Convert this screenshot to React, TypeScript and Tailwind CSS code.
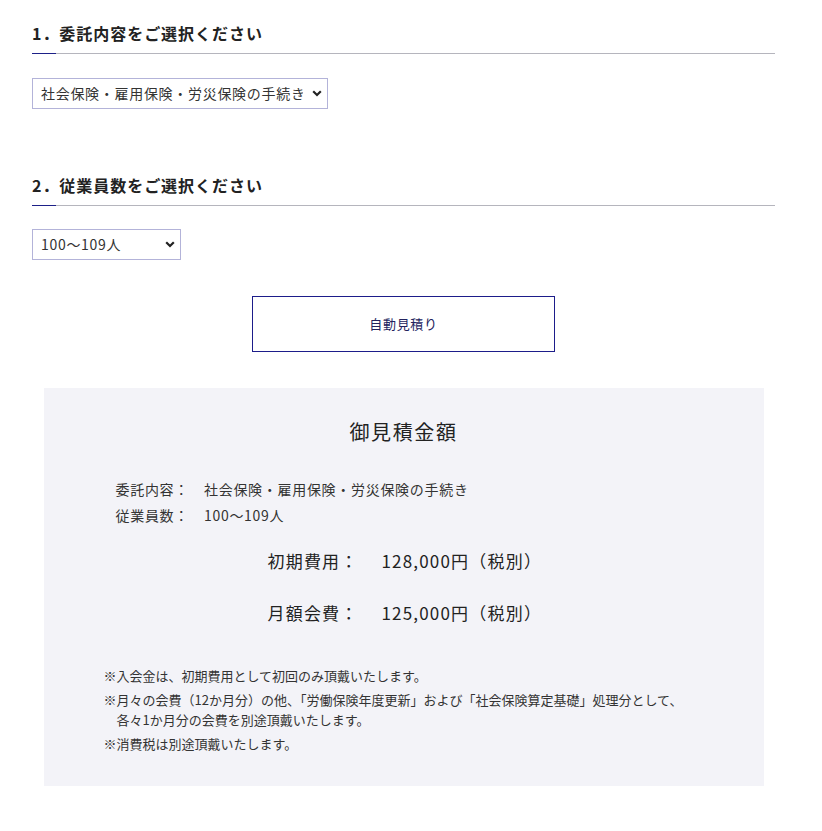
import { useState } from 'react';

const itakuOptions = [
  '社会保険・雇用保険・労災保険の手続き',
  '社会保険の手続き',
  '給与計算',
];

const ninzuOptions = ['1〜9人', '10〜19人', '50〜59人', '100〜109人'];

function SectionTitle({ text }: { text: string }) {
  return (
    <div className="relative border-b border-[#b5b5bd] pb-[8px]">
      <h2 className="text-[16px] leading-[24px] font-bold text-[#222] tracking-[0.06em]">{text}</h2>
      <span className="absolute left-0 bottom-[-1px] w-[24px] h-[1px] bg-[#1d2088]" />
    </div>
  );
}

function Select({ value, options, onChange, width }: { value: string; options: string[]; onChange: (v: string) => void; width: string }) {
  return (
    <div className={`relative ${width}`}>
      <select
        value={value}
        onChange={(e) => onChange(e.target.value)}
        className="appearance-none w-full h-[31px] border border-[#b3b3d9] bg-white pl-[8px] pr-[24px] text-[14px] tracking-[0.05em] text-[#333] outline-none"
      >
        {options.map((o) => (
          <option key={o} value={o}>{o}</option>
        ))}
      </select>
      <svg className="absolute right-[6px] top-[12px] pointer-events-none" width="10" height="7" viewBox="0 0 10 7">
        <path d="M1.2 1.2 L5 5 L8.8 1.2" fill="none" stroke="#222" strokeWidth="2.2" />
      </svg>
    </div>
  );
}

export default function App() {
  const [itaku, setItaku] = useState(itakuOptions[0]);
  const [ninzu, setNinzu] = useState('100〜109人');

  return (
    <div className="bg-white min-h-[831px] pl-[32px] pt-[21px] font-['Noto_Sans_CJK_JP','Noto_Sans',sans-serif] text-[#333]">
      <div className="w-[743px]">
        <SectionTitle text="1．委託内容をご選択ください" />
        <div className="mt-[24px]">
          <Select value={itaku} options={itakuOptions} onChange={setItaku} width="w-[296px]" />
        </div>

        <div className="mt-[64px]">
          <SectionTitle text="2．従業員数をご選択ください" />
        </div>
        <div className="mt-[23px]">
          <Select value={ninzu} options={ninzuOptions} onChange={setNinzu} width="w-[149px]" />
        </div>

        <button className="block mx-auto mt-[36px] w-[303px] h-[56px] border border-[#1d1d8a] bg-white text-[13px] tracking-[0.05em] text-[#23235e]">
          自動見積り
        </button>

        {/* 見積結果 */}
        <div className="mx-auto mt-[36px] w-[720px] bg-[#f3f3f8] pt-[29px] pb-[32px]">
          <h3 className="text-center text-[20px] leading-[30px] tracking-[0.08em] text-[#222]">御見積金額</h3>

          <div className="mt-[29px] pl-[72px] text-[14px] leading-[26px] tracking-[0.05em] text-[#333]">
            <div className="flex gap-[15px]">
              <span>委託内容：</span>
              <span>{itaku}</span>
            </div>
            <div className="flex gap-[15px]">
              <span>従業員数：</span>
              <span>{ninzu}</span>
            </div>
          </div>

          <div className="mt-[20px] pl-[224px] text-[17px] leading-[26px] tracking-[0.07em] text-[#222] space-y-[26px]">
            <div className="flex gap-[23px]">
              <span>初期費用：</span>
              <span>128,000円（税別）</span>
            </div>
            <div className="flex gap-[23px]">
              <span>月額会費：</span>
              <span>125,000円（税別）</span>
            </div>
          </div>

          <div className="mt-[40px] pl-[60px] pr-[40px] text-[13px] leading-[20px] text-[#333] space-y-[4px]">
            <p className="pl-[1em] -indent-[1em]">※入会金は、初期費用として初回のみ頂戴いたします。</p>
            <p className="pl-[1em] -indent-[1em]">
              ※月々の会費（12か月分）の他、「労働保険年度更新」および「社会保険算定基礎」処理分として、<br />
              各々1か月分の会費を別途頂戴いたします。
            </p>
            <p className="pl-[1em] -indent-[1em]">※消費税は別途頂戴いたします。</p>
          </div>
        </div>
      </div>
    </div>
  );
}
